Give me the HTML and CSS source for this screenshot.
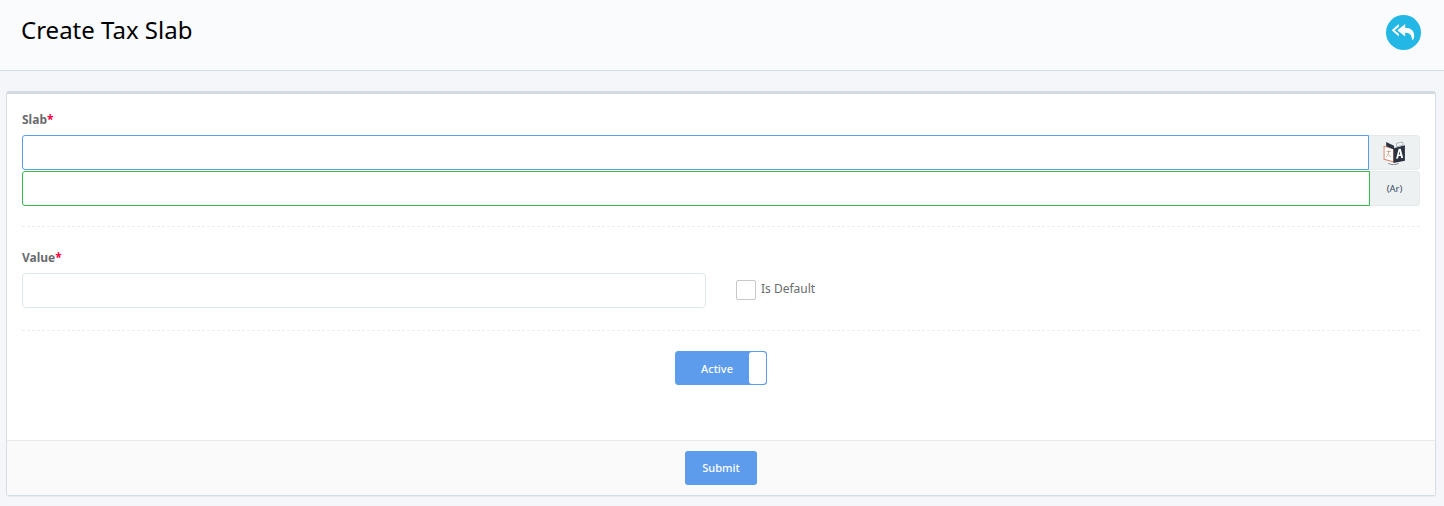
FILE: index.html
```html
<!DOCTYPE html>
<html lang="en">
<head>
<meta charset="utf-8">
<title>Create Tax Slab</title>
<link rel="stylesheet" href="styles.css">
</head>
<body>
<header class="page-head">
  <h1 class="page-title">Create Tax Slab</h1>
  <a class="back-btn" href="#" aria-label="Back">
    <svg viewBox="0 0 24 24" width="27" height="27" fill="#fff">
      <path d="M7.800 4.500 1.500 10l6.300 5.500v-2.300L4 10l3.800-3.200z"/>
      <path d="M13.500 4.500 6.500 10l7 5.500v-3.300c3.500 0 5.600 1.300 6.300 6.300 1 .1 1.700-1.400 1.700-3.500 0-4.700-3-7.200-8-7.300z"/>
    </svg>
  </a>
</header>
<main class="content">
  <form class="card">
    <div class="card-body">
      <label class="field-label">Slab<span class="req">*</span></label>
      <div class="input-group">
        <input class="input input-blue" type="text">
        <span class="addon">
          <svg viewBox="0 0 24 24" width="25" height="25">
            <path d="M2 6 11 8.500v12.500L2 18.500z" fill="#fff" stroke="#d98f72" stroke-width="1"/>
            <path d="M4 2 11.500 5.500V9L4 6z" fill="#2b3240"/>
            <path d="M11 8 22 5v15l-11 2z" fill="#2b3240"/>
            <path d="M14 3 20 2v3l-6 1.500z" fill="#f1f4f4" stroke="#8a94a0" stroke-width=".6"/>
            <path d="M13.500 18 16 8.500h2l2.300 8.600-1.800.3-.5-2h-2.100l-.5 2.300zM16.200 14h1.400l-.7-3z" fill="#fff"/>
            <path d="M4.500 11h4M6.500 10v1.500c0 2-1 3.500-2.500 4.500M5.500 13c.7 1.300 1.500 2.200 3 3" fill="none" stroke="#c8a38e" stroke-width=".9"/>
            <path d="M6 22.500c3 1.500 7 1.500 10 0" fill="none" stroke="#7d8590" stroke-width=".9"/>
          </svg>
        </span>
      </div>
      <div class="input-group input-group-ar">
        <input class="input input-green" type="text" dir="rtl">
        <span class="addon addon-ar">(Ar)</span>
      </div>
      <hr class="divider">
      <div class="value-row">
        <div class="value-col">
          <label class="field-label">Value<span class="req">*</span></label>
          <input class="input input-plain" type="text">
        </div>
        <label class="check">
          <span class="check-box"></span>
          <span class="check-text">Is Default</span>
        </label>
      </div>
      <hr class="divider divider-second">
      <div class="toggle-row">
        <div class="toggle">
          <span class="toggle-label">Active</span>
          <span class="toggle-knob"></span>
        </div>
      </div>
    </div>
    <div class="card-foot">
      <button class="submit" type="button">Submit</button>
    </div>
  </form>
</main>
</body>
</html>
```

FILE: styles.css
```css
* { box-sizing: border-box; }
html, body { margin: 0; padding: 0; }
body {
  height: 506px;
  overflow: hidden;
  background: #f4f6fa;
  font-family: "Noto Sans", "Open Sans", sans-serif;
  color: #6a6c6f;
}
.page-head {
  height: 71px;
  background: #f9fbfd;
  border-bottom: 1px solid #cfdde9;
  padding: 0 23px 0 21px;
  display: flex;
  align-items: flex-start;
  justify-content: space-between;
}
.page-title {
  margin: 13px 0 0;
  font-size: 24px;
  line-height: 33px;
  font-weight: 400;
  color: #000;
}
.back-btn {
  width: 35px;
  height: 35px;
  margin-top: 15px;
  border-radius: 50%;
  background: #23b7e5;
  display: flex;
  align-items: center;
  justify-content: center;
}
.content { padding: 20px 8px 0 6px; }
.card {
  height: 405px;
  background: #fff;
  border: 1px solid #d5dde5;
  border-top: 3px solid #d2dae2;
  border-radius: 3px;
  box-shadow: 0 1px 1px rgba(0,0,0,.05);
  display: flex;
  flex-direction: column;
}
.card-body { flex: 1; padding: 16px 15px 0; }
.field-label {
  display: block;
  height: 25px;
  font-size: 12px;
  line-height: 20px;
  font-weight: 700;
  color: #6a6c6f;
}
.req { color: #f5003d; }
.input-group { display: flex; height: 35px; }
.input-group-ar { margin-top: 1px; }
.input {
  display: block;
  height: 35px;
  background: #fff;
  outline: 0;
  padding: 0 10px;
}
.input-group .input { flex: 1; min-width: 0; border-radius: 3px 0 0 3px; }
.input-blue { border: 1px solid #5d9cec; }
.input-green { border: 1px solid #37bc4b; }
.input-plain { width: 100%; border: 1px solid #dde6e9; border-radius: 4px; }
.addon {
  width: 51px;
  background: #edf1f2;
  border: 1px solid #e4eaec;
  border-left: 0;
  border-radius: 0 4px 4px 0;
  display: flex;
  align-items: center;
  justify-content: center;
}
.addon-ar {
  width: 50px;
  font-size: 9.500px;
  color: #3a4a66;
}
.divider {
  border: 0;
  border-top: 1px dashed #eaeef0;
  margin: 20px 0 0;
}
.value-row { display: flex; margin-top: 21px; }
.value-col { width: 684px; }
.check {
  display: flex;
  align-items: center;
  margin: 25px 0 0 30px;
  height: 35px;
}
.check-box {
  width: 20px;
  height: 20px;
  border: 1px solid #c8c8c8;
  border-radius: 2px;
  background: #fff;
  margin-top: -1px;
}
.check-text {
  margin: -5px 0 0 5px;
  font-size: 12px;
  color: #6a6c6f;
}
.divider-second { margin-top: 22px; }
.toggle-row { display: flex; justify-content: center; margin-top: 20px; }
.toggle {
  width: 92px;
  height: 34px;
  background: #5d9cec;
  border: 1px solid #5d9cec;
  border-radius: 3px;
  display: flex;
  overflow: hidden;
}
.toggle-label {
  flex: 1;
  text-align: center;
  padding-left: 9px;
  font-size: 11px;
  line-height: 34px;
  font-weight: 500;
  color: #fff;
}
.toggle-knob {
  width: 17px;
  background: #fff;
  border-radius: 3px;
}
.card-foot {
  height: 55px;
  background: #fafafa;
  border-top: 1px solid #eaeaea;
  display: flex;
  justify-content: center;
  padding-top: 10px;
}
.submit {
  width: 72px;
  height: 34px;
  padding: 0 0 2px;
  background: #5d9cec;
  border: 0;
  border-radius: 3px;
  font-family: inherit;
  font-size: 11px;
  font-weight: 500;
  color: #fff;
}
```
